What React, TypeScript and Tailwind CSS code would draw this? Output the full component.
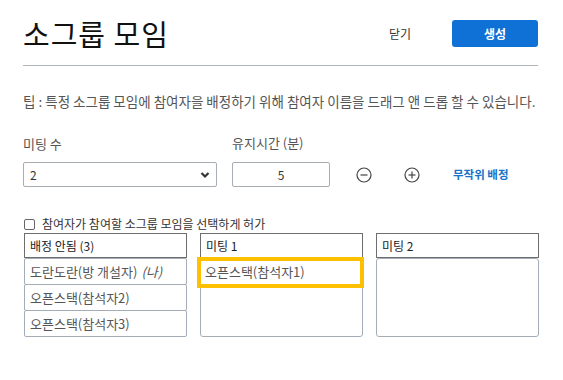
import React from "react";

const font = "font-['Noto_Sans_CJK_KR','Noto_Sans',sans-serif]";

function CircleIcon({ plus }: { plus?: boolean }) {
  return (
    <svg width="16" height="16" viewBox="0 0 16 16" fill="none" stroke="#444" strokeWidth="1.2">
      <circle cx="8" cy="8" r="7" />
      <line x1="4.5" y1="8" x2="11.5" y2="8" />
      {plus && <line x1="8" y1="4.5" x2="8" y2="11.5" />}
    </svg>
  );
}

function Header({ children }: { children: React.ReactNode }) {
  return (
    <div className="h-[25px] border border-[#6e6e6e] flex items-center px-[5px] text-[12px] text-[#222]">
      {children}
    </div>
  );
}

export default function App() {
  return (
    <div className={`w-[563px] h-[380px] bg-white ${font}`}>
      <div className="w-[515px] ml-[23px] pt-[20px]">
        <div className="flex items-center justify-between h-[27px]">
          <div className="text-[29px] leading-[29px] text-[#111] tracking-[1px]">소그룹 모임</div>
          <div className="flex items-center">
            <span className="text-[12px] text-[#333] mr-[41px]">닫기</span>
            <button className="w-[86px] h-[27px] rounded-[3px] bg-[#0f70d6] text-white text-[12px] font-bold">생성</button>
          </div>
        </div>
        <div className="mt-[18px] border-t border-[#b0b5ba]" />
      </div>
      <div className="ml-[23px] mt-[26px] text-[13.5px] leading-[18px] text-[#555] whitespace-nowrap">
        팁 : 특정 소그룹 모임에 참여자을 배정하기 위해 참여자 이름을 드래그 앤 드롭 할 수 있습니다.
      </div>
      <div className="ml-[23px] mt-[24px] flex items-end">
        <div className="w-[194px]">
          <div className="text-[13px] leading-[18px] text-[#555]">미팅 수</div>
          <div className="mt-[9px] h-[25px] border border-[#a7adb3] rounded-[2px] flex items-center justify-between pl-[6px] pr-[6px] text-[12px] text-[#333]">
            <span>2</span>
            <svg width="10" height="8" viewBox="0 0 10 8" fill="none" stroke="#333" strokeWidth="2.2">
              <polyline points="1.5,2 5,5.5 8.5,2" />
            </svg>
          </div>
        </div>
        <div className="ml-[15px] w-[98px]">
          <div className="text-[13px] leading-[18px] text-[#555]">유지시간 (분)</div>
          <div className="mt-[10px] h-[25px] border border-[#a7adb3] rounded-[2px] flex items-center justify-center text-[12px] text-[#333]">
            5
          </div>
        </div>
        <div className="h-[25px] flex items-center ml-[26px]">
          <CircleIcon />
          <span className="ml-[32px] flex"><CircleIcon plus /></span>
          <span className="ml-[33px] text-[11.5px] font-bold text-[#1a73c9]">무작위 배정</span>
        </div>
      </div>
      <div className="ml-[24px] mt-[29px] flex items-center h-[16px]">
        <div className="w-[11px] h-[11px] border border-[#666] rounded-[2px]" />
        <span className="ml-[7px] text-[12px] text-[#333]">참여자가 참여할 소그룹 모임을 선택하게 허가</span>
      </div>
      <div className="ml-[24px] mt-[1px] flex gap-[13px]">
        <div className="w-[163px]">
          <Header>배정 안됨 (3)</Header>
          <div className="flex flex-col">
            <div className="h-[27px] border border-[#a3adb7] rounded-[2px] flex items-center px-[5px] text-[13px] text-[#555]">
              도란도란(방 개설자) <i className="ml-[4px]">(나)</i>
            </div>
            <div className="-mt-px h-[27px] border border-[#a3adb7] rounded-[2px] flex items-center px-[5px] text-[13px] text-[#555]">
              오픈스택(참석자2)
            </div>
            <div className="-mt-px h-[27px] border border-[#a3adb7] rounded-[2px] flex items-center px-[5px] text-[13px] text-[#555]">
              오픈스택(참석자3)
            </div>
          </div>
        </div>
        <div className="w-[163px]">
          <Header>미팅 1</Header>
          <div className="h-[79px] border border-[#a3adb7] rounded-[3px]">
            <div className="relative h-[26px] flex items-center px-[4px] text-[13px] text-[#555]">
              <span className="absolute -left-[4px] -right-[2px] -top-[2px] -bottom-[3px] border-4 border-[#ffc000]" />
              오픈스택(참석자1)
            </div>
          </div>
        </div>
        <div className="w-[163px]">
          <Header>미팅 2</Header>
          <div className="h-[79px] border border-[#a3adb7] rounded-[3px]" />
        </div>
      </div>
    </div>
  );
}
